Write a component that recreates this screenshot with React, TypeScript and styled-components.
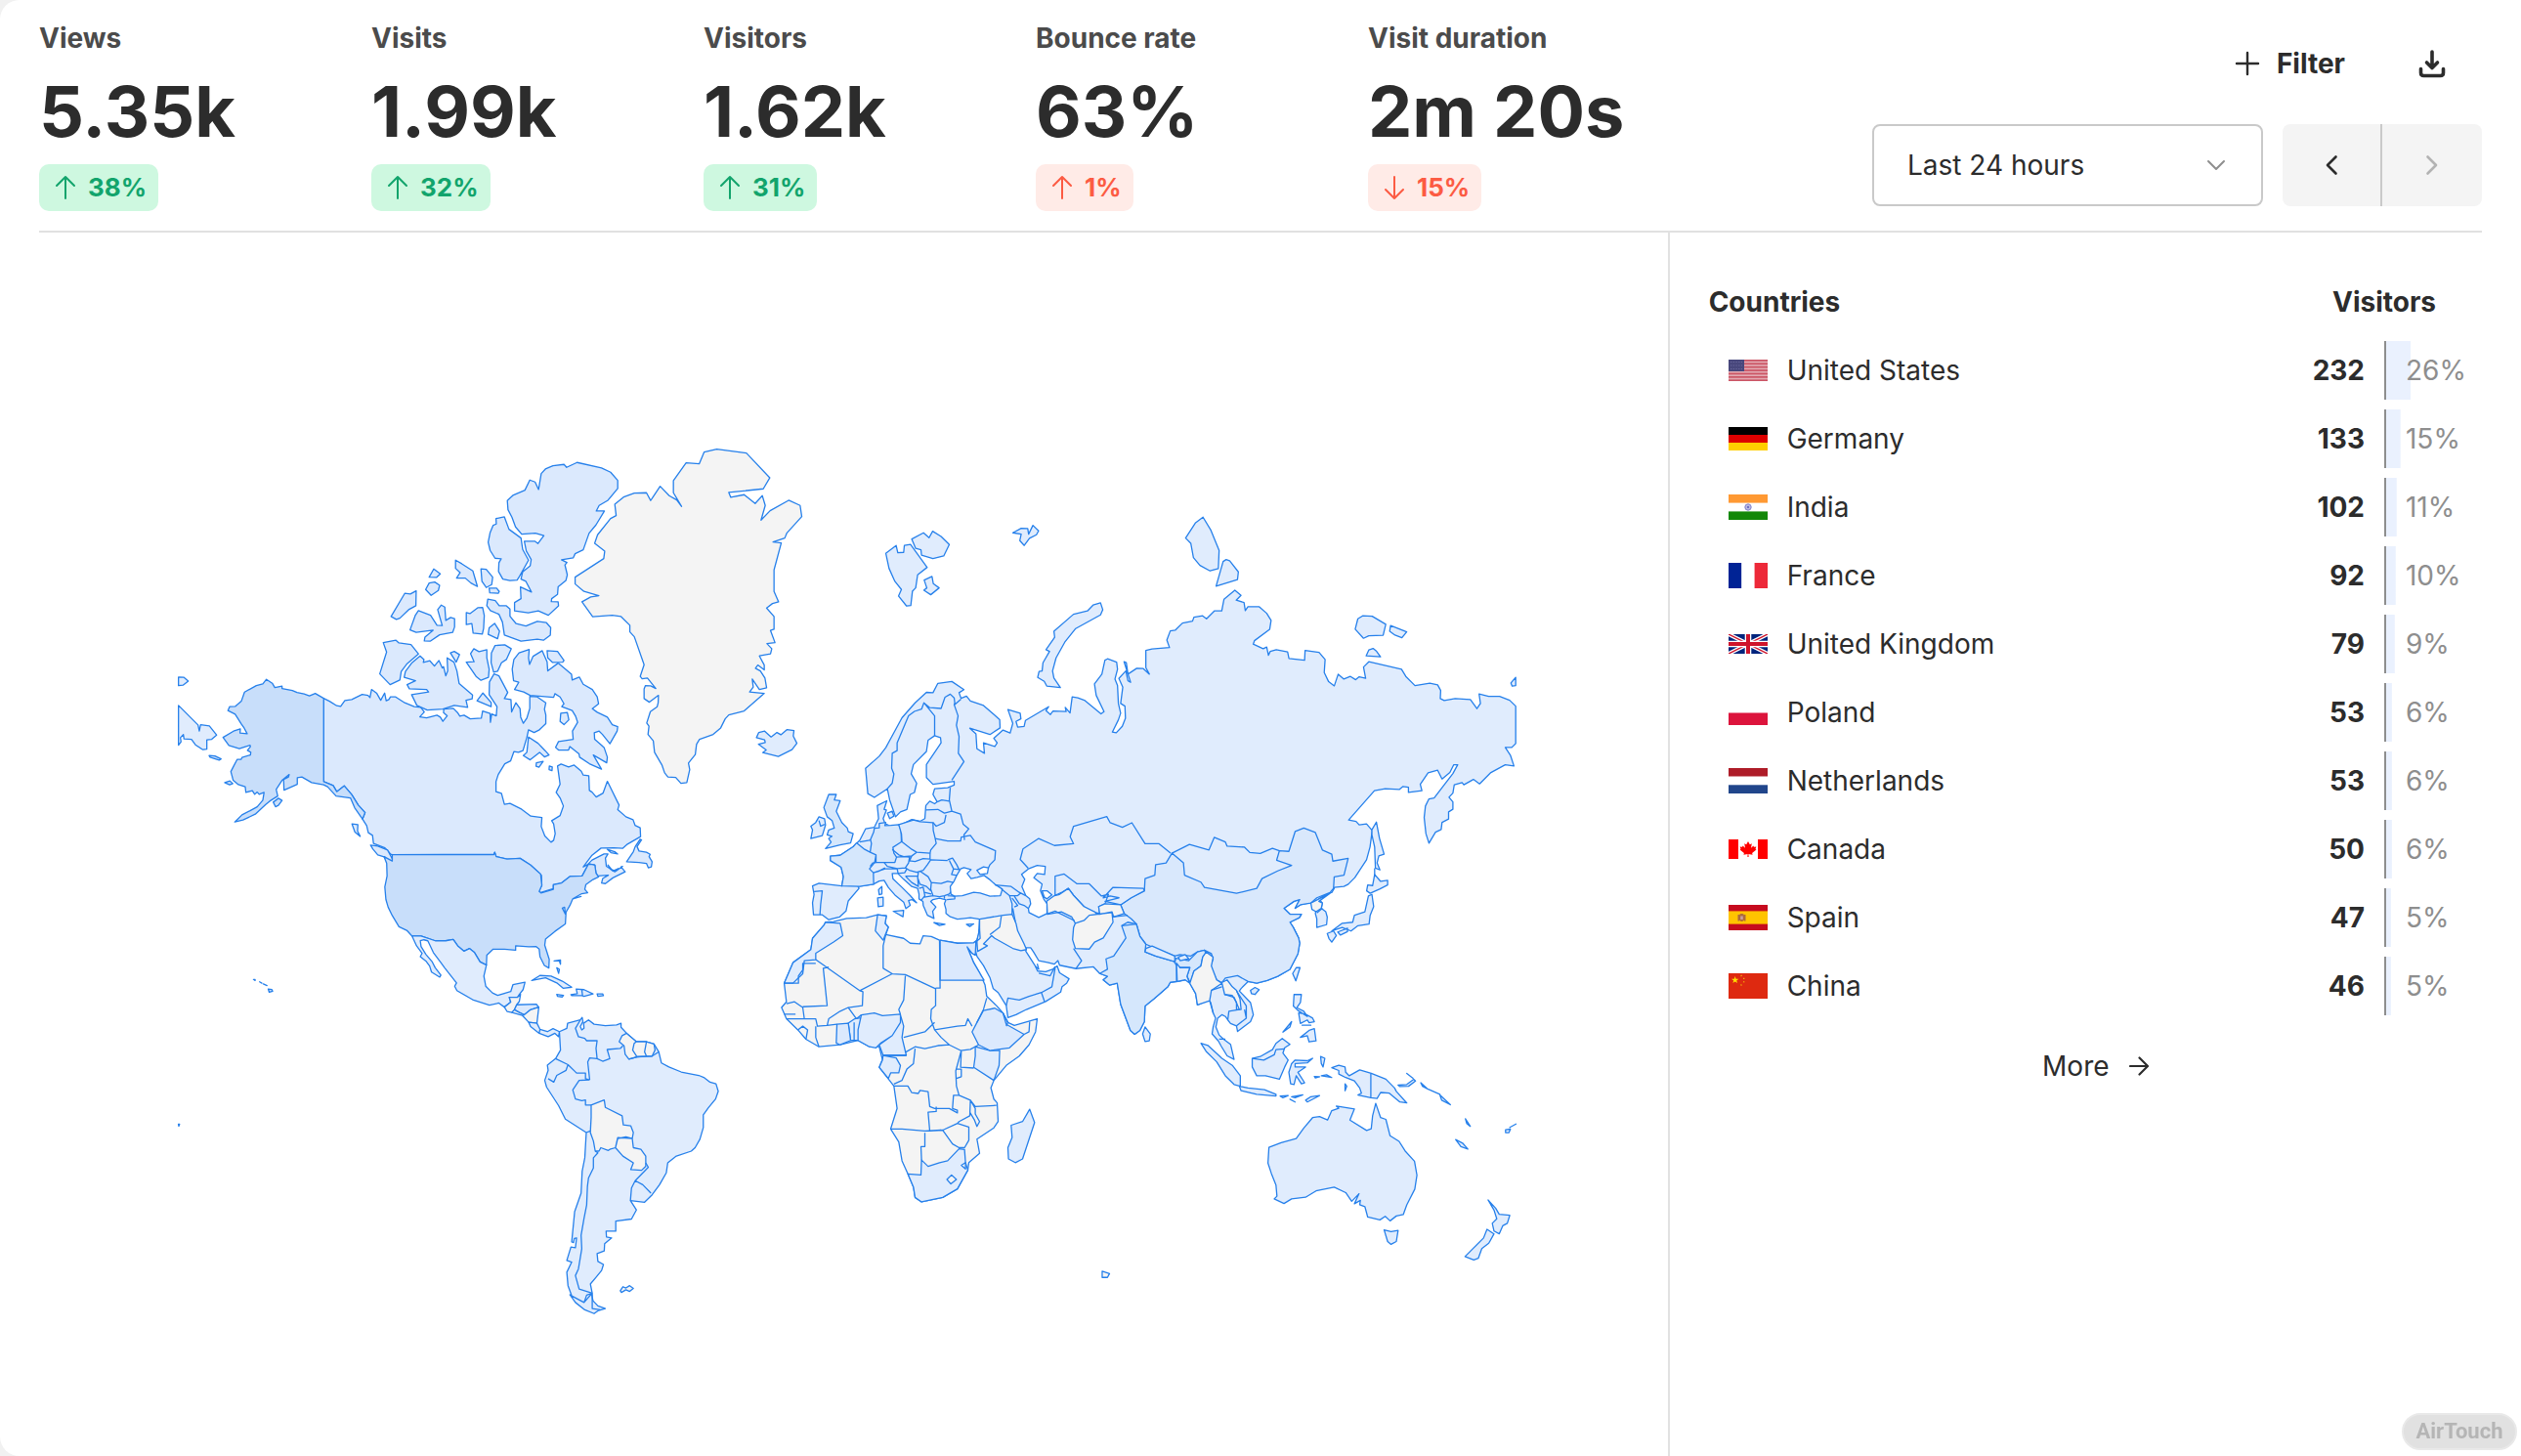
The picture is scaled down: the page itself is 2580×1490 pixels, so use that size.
import React from 'react';
import styled, { createGlobalStyle } from 'styled-components';

const GlobalStyle = createGlobalStyle`
  * { box-sizing: border-box; }
  body { margin: 0; background: #f1f1f1; }
  body, button, select, table {
    font-family: Inter, "Liberation Sans", sans-serif;
    font-size: 28px;
    line-height: 42px;
    color: #2c2c2c;
  }
`;

/* ---------- page frame ---------- */

const Page = styled.div`
  display: flex;
  flex-direction: column;
  min-height: 100vh;
  padding: 0 40px;
  background: #fff;
  border-radius: 20px 0 0 20px;
`;

const Header = styled.header`
  display: flex;
  justify-content: space-between;
  padding: 18px 0 20px;
  border-bottom: 2px solid #e1e1e1;
`;

const Metrics = styled.div`
  display: flex;
  gap: 60px;
`;

const Metric = styled.section`
  display: flex;
  flex-direction: column;
  align-items: flex-start;
  min-width: 280px;
  white-space: nowrap;
`;

const MetricLabel = styled.h2`
  margin: 0;
  font-size: 28px;
  font-weight: 700;
  color: #4b4b4b;
`;

const MetricValue = styled.div`
  font-size: 72px;
  line-height: 108px;
  font-weight: 700;
`;

const Change = styled.div<{ $good: boolean }>`
  display: flex;
  align-items: center;
  gap: 10px;
  height: 48px;
  padding: 0 12px;
  border-radius: 10px;
  font-size: 26px;
  font-weight: 700;
  color: ${(p) => (p.$good ? '#12a46c' : '#fc5b43')};
  background: ${(p) => (p.$good ? '#cef8e0' : '#ffebe7')};
`;

const Icon = styled.svg`
  display: block;
  flex: none;
  fill: none;
  stroke: currentColor;
  stroke-linecap: round;
  stroke-linejoin: round;
`;

/* ---------- toolbar ---------- */

const Tools = styled.div`
  display: flex;
  flex-direction: column;
  align-items: flex-end;
  justify-content: flex-end;
  gap: 20px;
  padding-bottom: 5px;
`;

const ToolRow = styled.div<{ $gap: number }>`
  display: flex;
  gap: ${(p) => p.$gap}px;
`;

const PlainButton = styled.button`
  display: flex;
  align-items: center;
  justify-content: center;
  gap: 16px;
  height: 84px;
  padding: 0 32px;
  border: 0;
  border-radius: 8px;
  background: transparent;
  font-weight: 700;
  cursor: pointer;
`;

const SelectBox = styled.label`
  display: grid;
  align-items: center;
  width: 400px;
  & > * { grid-area: 1 / 1; }
  & > svg { justify-self: end; margin-right: 38px; color: #8e8e8e; pointer-events: none; }
`;

const Select = styled.select`
  appearance: none;
  width: 100%;
  height: 84px;
  padding: 0 34px;
  border: 2px solid #c9c9c9;
  border-radius: 8px;
  background: #fff;
`;

const Pager = styled.div`
  display: grid;
  grid-template-columns: 1fr 1fr;
  width: 204px;
  border-radius: 8px;
  overflow: hidden;
`;

const PagerButton = styled.button`
  display: grid;
  place-items: center;
  height: 84px;
  padding: 0;
  border: 0;
  background: #f4f4f4;
  color: #2c2c2c;
  &:disabled { color: #b3b3b3; }
  &:first-child { border-right: 2px solid #c9c9c9; }
`;

/* ---------- body ---------- */

const Body = styled.main`
  display: grid;
  grid-template-columns: 2fr 1fr;
  flex: 1;
`;

const MapSvg = styled.svg`
  display: block;
  width: 100%;
  & path {
    stroke: #2680eb;
    stroke-width: 1.3;
    stroke-linejoin: round;
  }
`;

const Side = styled.aside`
  display: flex;
  flex-direction: column;
  align-items: center;
  padding: 31px 0 0 40px;
  border-left: 2px solid #e1e1e1;
`;

const Table = styled.table`
  width: 100%;
  table-layout: fixed;
  border-collapse: separate;
  border-spacing: 0 10px;
`;

const HeadCell = styled.th<{ $align: string; $width?: number }>`
  height: 60px;
  padding: 0;
  width: ${(p) => (p.$width ? p.$width + 'px' : 'auto')};
  font-weight: 700;
  text-align: ${(p) => p.$align};
`;

const NameCell = styled.td`
  height: 60px;
  padding: 0 0 0 20px;
`;

const Country = styled.div`
  display: flex;
  align-items: center;
  gap: 20px;
`;

const CountCell = styled.td`
  padding: 0 20px 0 0;
  font-weight: 700;
  text-align: right;
`;

const ShareCell = styled.td`
  padding: 0 0 0 20px;
  border-left: 2px solid #8e8e8e;
  color: #8e8e8e;
  background: linear-gradient(#eaf1fe, #eaf1fe) no-repeat padding-box;
`;

const MoreLink = styled.a`
  display: flex;
  align-items: center;
  gap: 20px;
  height: 64px;
  margin-top: 10px;
  color: #2c2c2c;
  text-decoration: none;
`;

const TouchBadge = styled.div`
  position: fixed;
  right: 4px;
  bottom: 6px;
  display: flex;
  align-items: center;
  justify-content: center;
  width: 118px;
  height: 38px;
  border: 2px solid #e9e9e9;
  border-radius: 19px;
  background: #e1e1e1;
  color: #b5b5b5;
  font-family: Roboto, "Liberation Sans", sans-serif;
  font-size: 22px;
  font-weight: 700;
`;

/* ---------- world map ---------- */

/* Each map sheet has its own origin and scale: [x, y, units per px across, units per px down]. */
const SHEETS: Record<string, number[]> = {
  A: [170, 440, 3, 3],
  B: [560, 440, 3, 3],
  C: [780, 660, 3, 2.6133],
  D: [860, 500, 2.24, 3],
  E: [1040, 760, 2.8, 2.8],
  F: [170, 820, 2.6133, 2.9037],
  G: [870, 820, 3, 3],
};

/* Turns "A 1,2 3,4 z" into path data; a letter changes the sheet, "z" closes, "|" starts a new line. */
function outline(text: string) {
  let sheet = SHEETS.A;
  let pen = 'M';
  return text
    .trim()
    .split(/\s+/)
    .map((t) => {
      if (SHEETS[t]) {
        sheet = SHEETS[t];
        return '';
      }
      if (t === 'z') {
        pen = 'M';
        return 'Z';
      }
      if (t === '|') {
        pen = 'M';
        return '';
      }
      const [x, y] = t.split(',').map(Number);
      const out = pen + (sheet[0] + x / sheet[2]).toFixed(1) + ' ' + (sheet[1] + y / sheet[3]).toFixed(1);
      pen = 'L';
      return out;
    })
    .join('');
}

const NONE = '#f4f4f4';
const LOW = '#e0ecfd';
const CANADA = '#dbe9fd';
const CHINA = '#d9e8fc';
const MID = '#d5e7fc';
const USA = '#c8defa';

const LAND: [string, string][] = [
  /* Greenland */
  [NONE, `B 413,235 398,215 375,202 347,173 318,217 305,193 268,194 235,206 208,228 212,263 195,272 155,322 146,348 177,372 174,395 86,452 86,473 113,496 159,509 134,513 107,528 140,574 200,569 227,573 254,600 254,620 268,635 298,721 286,757 292,764 308,762 334,794 318,786 302,785 298,795 298,825 314,836 342,815 341,838 338,850 317,865 306,900 313,910 310,935 326,955 330,990 353,1030 361,1053 371,1066 395,1067 411,1085 429,1083 438,1043 434,1023 455,997 459,965 468,950 510,935 533,915 547,887 558,875 605,863 667,809 622,805 633,790 630,765 652,797 674,792 669,762 655,740 640,732 647,722 667,737 667,722 652,694 686,688 690,672 675,656 700,653 686,616 697,612 697,573 674,547 692,533 711,528 697,496 697,430 719,347 694,344 730,332 736,317 782,266 777,232 742,216 685,248 657,277 670,232 661,202 639,226 605,199 564,207 558,192 664,181 684,147 612,71 521,59 482,68 467,104 427,101 388,156 388,193 z`],
  /* Canada */
  [CANADA, `A 484,824 502,833 524,847 536,849 549,831 570,828 602,812 620,815 626,822 631,797 647,809 659,830 671,808 676,832 684,828 689,820 705,820 733,838 762,850 782,852 793,866 779,881 800,884 832,876 842,882 850,895 863,878 852,868 853,857 882,855 895,868 902,879 915,876 934,887 968,885 972,863 995,871 996,898 1000,872 1014,878 1016,850 992,813 993,774 1007,749 1022,755 1049,806 1039,825 1059,828 1061,866 1074,838 1087,856 1089,882 1097,901 1108,885 1117,855 1117,818 1140,820 1166,838 1162,858 1166,875 1166,902 1145,922 1130,929 1113,921 1108,944 1096,985 1082,990 1068,988 1058,1016 1040,1025 1020,1058 1013,1080 1013,1111 1030,1116 1039,1150 1056,1147 1092,1165 1120,1186 1154,1190 1152,1218 1163,1247 1182,1266 1190,1260 1195,1240 1190,1210 1184,1200 1210,1184 1220,1155 1210,1130 1198,1113 1210,1088 1202,1032 1213,1026 1236,1035 1253,1029 1275,1048 1281,1060 1298,1062 1300,1107 1308,1112 1321,1127 1342,1115 1355,1079 1391,1152 1387,1166 1412,1188 1434,1197 1440,1214 1456,1222 1457,1249 1417,1272 1402,1285 1375,1283 1336,1284 1308,1306 1281,1342 1294,1335 1308,1321 1345,1302 1357,1302 1349,1315 1352,1340 1378,1357 1402,1340 F 1217,195 1228,210 1195,228 1175,245 1165,243 1168,230 1183,220 1155,222 1150,214 1147,190 1130,187 1113,222 1080,224 1058,243 1036,250 1036,260 998,273 998,265 1005,250 1004,220 975,190 947,170 912,172 883,165 879,152 877,158 605,159 A 690,1303 672,1283 637,1270 634,1245 621,1237 616,1215 603,1195 611,1175 590,1152 570,1120 547,1093 524,1111 513,1092 484,1080 z`],
  [CANADA, `A 628,1275 650,1278 680,1290 695,1318 697,1336 672,1312 650,1305 635,1287 z 571,1210 589,1212 588,1232 596,1248 580,1235 z
   1144,183 1133,160 1117,154 1102,185 1065,201 1048,217 1050,245 1062,268 1073,298 1092,320 1134,317 1160,325 1142,349 1133,342 1100,342 1106,372 1121,398 1118,417 1095,436 1090,458 1105,465 1122,498 1088,482 1090,518 1070,530 1070,556 1112,562 1143,556 1174,569 1205,540 1204,528 1183,527 1184,518 1202,505 1204,482 1228,462 1232,445 1225,415 1231,407 1214,399 1250,393 1256,380 1281,368 1299,317 1320,292 1346,249 1321,249 1330,232 1357,216 1387,180 1387,155 1365,130 1337,117 1262,100 1230,115 1222,106 1188,110 1165,120 1152,134 z
   1013,272 1039,267 1053,305 1090,332 1095,367 1113,400 1085,450 1078,461 1056,463 1034,458 1021,435 1022,408 1029,396 1010,394 995,370 989,345 995,315 1004,293 1014,289 z
   889,400 908,411 942,433 956,481 936,470 919,455 892,455 903,438 889,425 z 967,427 983,428 1003,452 1000,475 983,484 970,465 z 992,486 1015,486 1023,496 1020,502 994,500 z
   822,427 842,442 830,453 808,452 z 808,470 825,467 840,477 836,493 814,508 797,490 z 768,494 767,540 745,552 718,578 707,582 691,573 733,502 750,504 z
   775,555 812,569 832,600 848,601 834,552 845,538 856,544 859,585 874,576 886,580 886,605 880,622 840,629 811,649 793,648 795,636 820,615 768,622 749,614 765,570 z
   922,561 933,564 957,546 972,545 977,570 975,610 971,627 943,624 939,595 922,598 z
   988,520 1011,524 1023,540 1045,540 1056,550 1056,572 1075,595 1105,602 1140,588 1168,592 1181,607 1180,630 1159,646 1140,643 1090,649 1039,630 1033,590 1022,566 996,555 985,540 z
   1009,594 1024,618 1018,641 989,628 992,608 z 667,653 706,646 715,654 752,659 775,688 740,718 722,742 718,768 688,782 656,749 677,682 z
   780,694 792,705 790,714 810,709 824,725 838,708 848,731 852,727 859,755 865,740 863,700 884,713 893,740 900,779 941,814 940,826 921,830 926,852 885,846 850,857 802,860 770,846 754,813 806,805 800,797 747,795 740,782 766,770 731,760 735,742 755,715 z
   873,685 885,680 901,690 891,713 z 935,687 945,672 961,681 985,675 985,700 992,735 990,760 967,769 952,757 922,713 946,712 z
   1010,662 1040,660 1060,672 1045,705 1030,715 1018,741 1006,744 998,715 999,685 z
   1115,674 1113,700 1116,720 1127,695 1155,678 1170,712 1172,740 1204,716 1245,750 1247,768 1269,759 1281,781 1309,797 1324,820 1328,841 1309,856 1324,867 1355,882 1370,905 1387,911 1385,925 1363,964 1340,935 1330,925 1315,930 1316,950 1345,975 1355,1005 1353,1022 1312,998 1337,1042 1300,1025 1270,1005 1268,995 1240,972 1236,983 1205,983 1196,975 1205,957 1250,950 1248,925 1264,898 1258,880 1247,862 1215,850 1222,841 1210,820 1194,810 1190,821 1118,815 1098,805 1070,797 1083,775 1067,770 1063,735 1068,705 1084,685 z
   1170,678 1202,680 1222,708 1218,713 1187,714 1172,700 z 1212,870 1232,868 1237,890 1222,905 1210,895 z 973,808 998,837 998,850 955,832 z
   1113,943 1142,962 1164,985 1176,998 1162,1004 1147,990 1118,1013 1097,1000 1108,990 z 1137,1022 1158,1018 1145,1036 1136,1033 z 1177,1032 1186,1035 1185,1046 1176,1043 z
   F 1268,113 1255,135 1250,150 1232,180 1265,182 1285,185 1290,198 1298,195 1300,180 1292,165 1295,158 1285,152 1265,148 1260,135 1272,115 z 1180,143 1200,150 1208,157 1190,153 z 1182,190 1190,203 1203,207 1210,200 1195,208 z`],
  /* United States */
  [USA, `A 484,824 458,809 440,817 424,811 402,806 388,800 356,794 356,787 334,791 326,778 308,766 297,780 277,785 241,805 231,833 212,849 195,850 190,862 212,873 231,903 240,916 249,933 227,931 228,918 207,925 175,944 193,969 225,979 258,968 259,973 250,984 260,990 259,998 233,1006 230,1012 218,1012 206,1035 199,1049 206,1076 222,1089 243,1096 245,1113 265,1108 272,1119 280,1112 286,1119 301,1113 297,1137 280,1157 258,1169 233,1182 211,1204 236,1198 274,1180 306,1150 318,1140 343,1124 338,1104 357,1075 378,1058 376,1066 361,1073 362,1106 403,1088 403,1068 417,1066 447,1083 484,1090 496,1096 522,1124 566,1130 579,1160 603,1195 611,1175 590,1152 570,1120 547,1093 524,1111 513,1092 484,1080 z
   F 605,159 877,159 879,152 883,165 912,172 947,170 975,190 1002,217 1005,250 998,268 1003,273 1036,262 1036,248 1058,243 1080,224 1113,222 1130,187 1140,188 1147,190 1150,214 1157,225 1142,233 1123,248 1120,262 1128,272 1112,275 1088,290 1080,310 1070,330 1068,365 1040,387 1015,410 1013,428 1025,470 1024,496 1012,488 1000,462 998,440 990,432 970,433 935,430 935,443 905,440 875,440 858,458 857,487 840,478 825,450 812,438 797,446 780,430 768,411 748,415 720,415 682,401 658,401 645,385 623,373 605,340 594,315 588,292 585,255 591,222 590,185 583,165 605,178 z
   1060,318 1068,336 1066,315 z 1088,290 1110,283 z 273,558 283,560 285,565 276,568 z 234,530 238,530 238,533 z 250,537 256,541 z 260,543 270,548 z A 180,1083 196,1078 205,1086 195,1090 z 329,1143 345,1131 356,1138 345,1153 336,1157 z 132,1000 150,1001 169,1010 163,1014 135,1005 z`],
  /* Central America and the Caribbean */
  [LOW, `F 658,401 682,401 720,415 748,415 768,411 780,430 797,446 812,438 825,450 840,478 857,487 850,520 855,550 873,570 887,577 922,566 928,545 960,538 955,560 945,574 940,583 918,583 922,597 905,612 890,600 865,606 820,590 778,563 772,550 777,540 745,495 735,480 715,450 700,415 690,412 680,415 682,432 695,455 712,478 720,495 735,517 732,523 710,508 705,490 695,475 680,462 685,452 670,430 z`],
  [NONE, `F 905,612 922,597 918,583 940,583 948,574 945,595 938,605 932,620 925,628 912,625 z`],
  [CANADA, `F 938,605 990,603 997,612 975,620 958,635 945,628 932,620 z`],
  [NONE, `F 925,628 932,620 945,628 958,635 953,637 z 958,635 975,620 997,612 992,660 970,657 953,637 z`],
  [LOW, `F 970,657 992,660 1000,678 998,690 975,670 z 1000,678 1020,685 1035,676 1052,685 1050,700 1040,690 1022,700 998,690 z
   978,533 1000,518 1030,520 1060,535 1085,553 1062,556 1045,540 1015,525 z 1045,574 1063,577 1060,582 1047,580 z 1083,575 1100,572 1097,558 1118,560 1142,573 1118,580 1112,578 1085,578 z 1112,560 1114,578 z 1153,573 1168,573 1170,578 1155,580 z 1038,475 1055,472 1055,485 1052,475 z 1045,495 1052,500 1050,512 z 33,960 36,960 34,966 z`],
  /* South America */
  [LOW, `F 1052,685 1072,675 1074,660 1108,650 1113,643 1115,655 1108,670 1112,680 1118,675 1117,660 1130,650 1145,663 1175,667 1205,665 1217,660 1217,672 1232,690 1258,715 1285,715 1305,722 1318,745 1325,778 1345,790 1378,805 1425,815 1440,822 1455,835 1471,840 1477,862 1470,885 1450,912 1437,932 1437,970 1428,1005 1415,1030 1405,1040 1365,1055 1342,1075 1338,1105 1320,1140 1300,1170 1280,1192 1242,1187 1258,1215 1245,1242 1203,1248 1203,1278 1177,1278 1178,1295 1192,1298 1173,1315 1172,1337 1153,1345 1155,1368 1170,1377 1165,1395 1150,1415 1135,1435 1140,1462 1118,1490 1085,1470 1075,1440 1072,1400 1085,1370 1072,1365 1083,1325 1095,1327 1098,1298 1092,1300 1090,1312 1085,1310 1093,1220 1110,1165 1113,1100 1120,1060 1124,985 1068,945 1050,905 1018,850 1013,830 1022,800 1020,785 1042,765 1055,740 1053,700 z
   1080,1467 1118,1490 1125,1468 1138,1463 1142,1485 1155,1500 1175,1508 1155,1515 1145,1523 1120,1512 1095,1490 z`],
  [NONE, `F 1232,690 1220,697 1212,715 1225,727 1228,752 1238,767 1260,760 1248,740 1252,720 1258,715 z 1258,715 1285,715 1280,745 1285,758 1260,760 1248,740 1252,720 z 1285,715 1305,722 1308,740 1300,758 1285,758 1280,745 z
   1137,903 1172,888 1175,910 1220,935 1223,962 1243,965 1250,985 1247,1003 1208,1000 1202,1030 1187,1035 1183,1038 1163,1030 1158,1040 1148,1040 1143,1010 1135,985 1137,940 z
   1202,1030 1208,1003 1230,998 1247,1003 1250,1030 1270,1035 1283,1055 1283,1085 1272,1097 1243,1095 1250,1075 1222,1055 z 1215,1455 1222,1443 1230,1447 1240,1440 1250,1448 1240,1457 1230,1452 1218,1460 z`],
  /* Eurasia */
  [LOW, `C 540,103 583,98 620,120 605,128 611,143 628,137 640,150 680,162 730,200 731,222 700,240 638,223 657,238 660,278 683,290 680,262 715,272 722,262 712,250 740,228 762,236 770,210 755,173 793,183 795,198 780,205 785,220 805,218 D 425,712 478,670 472,682 482,694 488,683 518,685 516,672 527,689 532,640 545,643 560,650 598,692 605,685 587,635 583,600 600,570 607,527 613,523 634,533 636,555 630,585 636,605 638,660 643,690 638,710 624,748 633,750 647,730 654,705 653,668 643,660 648,610 639,583 655,560 660,590 666,595 651,532 656,535 660,570 680,552 695,553 709,570 701,550 701,497 715,493 755,488 749,465 757,437 768,435 785,413 808,407 811,395 831,391 840,400 858,376 875,376 880,340 905,312 919,328 908,343 926,350 929,375 935,363 961,363 978,383 988,405 985,432 950,467 947,478 970,492 978,487 982,512 986,500 1000,495 1026,502 1029,522 1065,527 1066,497 1098,503 1112,525 1110,565 1120,593 1133,606 1142,570 1155,585 1170,577 1182,587 1190,578 1205,583 1200,548 1212,532 1287,555 1297,577 1318,605 1352,598 1370,603 1377,620 1376,645 1385,651 1410,645 1445,648 1460,676 1468,660 1465,631 1487,638 1512,638 1535,650 1549,668 1549,783 1540,795 1525,795 1537,820 1545,852 1525,848 1492,872 1466,907 1452,893 1430,910 1426,903 1408,910 1405,935 1396,948 1405,962 1405,985 1395,993 1395,1015 1380,1025 1378,1047 1365,1055 1350,1089 1343,1060 1339,1010 1342,975 1350,953 1362,950 1382,915 1405,875 1416,848 1407,848 1398,872 1380,892 1370,865 1348,873 1330,908 1334,928 1303,933 1303,917 1290,915 1282,924 1250,922 1225,928 1166,1018 1183,1022 1190,1033 1207,1030 1220,1050 1215,1100 1207,1140 1180,1195 1165,1215 1155,1222 1133,1225
   E 912,418 905,430 893,432 868,448 878,460 875,475 888,485 892,500 890,522 862,530 862,505 858,490 860,480 848,478 850,460 838,460 815,465 800,475 813,450 797,455 768,475 785,492 818,492 812,502 785,515 795,530 810,560 813,575 808,605 785,650 750,670 720,682 690,690 665,685 645,705 640,712 672,745 680,780 672,800 645,820 635,828 632,812 615,805 607,795 600,785 590,780 578,790 573,815 582,838 595,850 615,865 625,908 605,898 588,870 580,855 562,835 565,815 572,790 565,775 558,745 552,738 520,752 515,720 498,690 495,670 488,680 465,685 442,687 435,700 395,735 370,755 368,800 355,825 340,836 328,825 300,750 290,690 268,695 250,680 262,670 240,662 222,643 172,648 125,638 120,625 110,635 90,630 65,625 50,600 42,588 30,588 28,598 55,640 62,655 85,657 105,650 118,640 125,660 152,677 145,690 132,700 128,715 85,742 30,765 0,780
   C 755,997 750,965 725,930 710,920 700,890 680,858 660,833 655,815 658,795
   G 395,410 398,362 370,358 352,360 330,362 308,355 295,345 295,332 290,315 295,303 275,298 255,302 248,308 264,325 254,338 258,360 238,350 225,320 224,308 212,300 212,285 208,268 190,262 165,240 147,222 130,222 132,238 160,265 185,290 205,312 190,302 180,305 185,320 172,330 165,310 140,290 118,265 105,243 90,245 72,255 25,262 28,268
   C 265,685 258,712 238,728 205,735 185,722 158,722 155,690 160,668 155,645 175,638 245,645 250,620 243,595 210,577 210,565 240,563 280,540 300,523 318,492 345,488 358,465 354,430 383,417 375,440 382,442 372,465 378,478 400,487 425,482 460,467 485,472 500,465 503,430 515,418 530,425 538,420 525,400 530,385 570,382 590,375 590,365 525,373 505,355 505,320 550,262 548,248 530,243 510,255 505,285 465,320 458,345 475,370 468,395 455,400 445,440 425,447 410,460 392,415 385,385 345,408 325,398 318,330 360,298 380,275 430,195 470,155 505,127 525,128 z`],
  [LOW, `B 650,929 668,925 688,943 706,929 718,936 737,920 758,923 756,940 767,962 752,982 710,1003 662,991 673,983 649,965 670,960 668,952 643,945 z
   1040,379 1072,355 1077,377 1095,376 1097,355 1116,352 1167,422 1138,445 1132,485 1122,495 1117,539 1104,541 1079,510 1088,490 1068,465 1050,425 z
   1120,335 1156,316 1173,331 1184,311 1210,327 1235,352 1218,387 1185,395 1150,385 1148,368 1132,364 z 1158,461 1182,450 1186,472 1204,485 1178,506 1157,492 1166,485 z
   D 396,136 415,122 430,123 432,140 442,113 455,130 450,142 434,153 422,175 412,160 415,140 z 832,88 850,128 869,190 867,246 848,253 825,236 810,212 804,168 792,152 815,105 z 885,218 893,222 913,256 911,280 862,300 878,224 z
   597,351 602,372 597,388 540,430 515,472 495,520 487,560 490,582 505,611 474,607 468,592 453,580 456,562 463,560 465,535 480,500 472,495 492,457 490,438 535,386 567,376 580,358 z
   1187,400 1198,391 1220,392 1251,417 1245,451 1212,452 1200,460 1181,432 z 1262,421 1299,440 1288,458 1272,450 1260,438 z 1212,496 1222,491 1230,500 1239,517 1206,514 z 1549,580 1538,597 1541,607 1549,605 z
   A 38,846 98,906 102,925 106,905 133,909 155,937 140,950 125,952 125,980 113,982 90,967 78,950 55,949 53,935 44,945 46,958 38,968 z 38,759 55,760 68,771 52,784 38,785 z
   C 175,460 192,465 195,482 185,510 150,518 155,495 150,485 165,475 z 385,450 400,445 405,458 392,465 z
   G 85,297 102,295 102,322 87,324 z 88,272 98,262 98,285 90,287 z 133,338 165,335 163,355 z 258,373 292,378 275,382 z 358,378 380,377 368,385 z`],
  [MID, `C 205,400 228,400 222,415 240,417 228,445 245,475 262,490 265,500 280,505 272,530 240,535 195,545 212,528 205,518 215,512 200,508 205,495 222,490 215,470 200,460 190,435 z
   G 90,68 110,65 107,75 125,74 150,72 157,90 158,125 132,142 135,160 143,172 138,188 105,188 80,188 80,165 62,157 66,130 63,118 73,95 75,83 90,82 z
   C 245,645 250,620 243,595 210,577 210,565 240,563 280,540 G 20,128 45,148 62,157 80,165 76,188 60,208 72,220 73,255 30,262 z`],
  [CANADA, `G 150,72 195,58 215,63 255,66 256,90 262,115 265,130 248,150 246,160 205,157 190,148 160,125 158,100 z`],
  [CHINA, `E 447,317 480,345 483,380 530,400 540,415 632,432 690,418 705,390 750,368 790,352 747,337 755,310 782,312 800,255 825,245 858,258 878,308 905,320 908,340 952,332 940,380 912,385 910,418 900,430 862,445 845,460 815,465 800,475 813,450 797,455 768,475 785,492 818,492 812,502 785,515 795,530 810,560 813,575 808,605 785,650 750,670 720,682 690,690 665,685 635,668 600,675 590,688 575,680 565,660 555,645 565,620 560,605 540,595 520,600 500,612 470,608 455,612 400,590 372,578 355,555 345,520 330,505 310,490 300,465 330,445 368,425 370,390 398,380 400,350 430,345 z 672,710 685,702 697,708 685,722 675,720 z`],
  [MID, `E 303,525 345,520 355,555 372,578 370,600 400,612 455,628 460,640 460,685 442,687 435,700 395,735 370,755 368,800 355,825 340,836 328,825 300,750 290,690 268,695 250,680 262,670 240,662 262,650 258,620 280,612 315,560 z 455,632 458,618 495,625 520,600 540,595 545,605 535,615 530,640 510,655 500,690 490,670 498,645 470,645 z`],
  [LOW, `E 372,590 390,583 455,612 455,628 400,612 370,600 z 465,615 485,608 495,620 470,625 z 460,632 470,645 498,645 490,670 498,690 485,680 462,685 z 112,383 138,377 175,405 210,405 245,440 265,435 255,462 237,470 240,490 225,487 195,470 165,438 150,418 130,430 112,438 z 250,445 278,415 365,418 368,425 330,445 300,465 255,455 295,445 270,440 z`],
  [NONE, `E 545,600 565,615 560,640 575,680 590,690 560,710 555,740 520,752 515,720 498,690 510,655 530,640 535,615 z 590,688 605,680 620,700 632,710 642,735 645,765 632,765 632,745 620,725 598,722 z 845,460 900,432 868,455 878,460 875,475 860,485 848,478 z
   88,455 108,440 125,435 150,418 165,438 195,470 225,485 232,492 210,495 195,510 170,518 160,500 130,485 90,492 z 170,518 195,510 210,495 275,487 278,515 250,560 225,572 210,592 170,590 162,565 165,530 z 237,470 255,462 300,465 310,490 280,500 275,485 240,492 z
   G 398,362 470,350 498,347 C 780,745 785,765 805,800 812,815 795,818 770,812 715,785 705,778 680,800 692,805 662,820 660,792 668,760 z`],
  ['#fff', `G 310,285 308,262 320,245 328,228 340,208 350,204 372,210 360,222 372,238 390,234 412,228 428,240 445,255 468,270 462,290 430,292 400,282 380,280 345,290 320,292 z 390,212 410,202 425,205 422,222 400,225 z
   527,225 548,208 575,197 600,200 598,225 575,222 565,235 590,255 585,275 595,300 605,315 605,345 580,357 550,342 548,330 555,315 552,300 540,290 528,262 537,240 z 590,275 605,275 620,288 605,300 597,295 z`],
  /* Japan, South-East Asia and Oceania */
  [LOW, `E 1033,228 1042,275 1055,320 1040,325 1035,345 1043,365 1030,360 1028,300 1020,265 1020,250 z 1028,378 1045,398 1065,395 1065,408 1042,420 1015,432 1005,425 1008,408 1022,410 z 1020,435 1025,470 1015,495 1012,520 980,525 960,540 935,530 920,535 905,540 935,518 965,515 970,495 1000,485 1010,440 z
   892,547 910,540 918,553 905,572 897,562 z 922,543 950,532 950,542 930,552 z 803,645 814,645 802,683 793,662 z 797,722 818,722 815,745 805,760 825,770 835,785 808,768 795,755 z 810,775 830,778 850,790 855,800 840,803 835,795 815,805 z 820,810 845,810 z 815,845 840,825 855,820 860,855 840,858 835,840 z 765,830 790,800 785,815 z
   530,862 550,868 590,905 620,925 643,955 643,985 625,980 600,955 575,915 545,885 z 640,985 665,990 712,995 745,1008 745,1013 690,1008 645,998 z 677,905 700,900 735,880 745,862 763,848 785,865 770,875 765,890 780,910 770,930 755,965 715,955 690,955 677,930 z
   790,920 800,910 835,912 850,905 835,918 800,920 800,930 830,930 808,945 827,975 818,978 803,955 797,980 787,978 782,945 z 757,1013 780,1012 765,1018 z 790,1015 822,1010 800,1018 z 830,1025 845,1015 870,1012 835,1030 z 873,900 885,905 880,930 875,920 z 855,957 870,958 858,961 z 875,955 890,952 905,960 z 785,1022 800,1030 z 943,978 948,985 943,998 z
   905,932 925,925 943,930 945,945 955,955 985,938 1018,948 1060,965 1085,990 1090,1000 1120,1033 1100,1030 1070,1005 1045,1003 1035,1020 1017,1018 980,1010 990,1005 985,990 970,970 945,960 925,950 925,940 z 1095,982 1120,980 1140,965 1145,970 1125,985 1100,986 z 1120,948 1138,962 z 1160,975 1180,993 1165,985 z 1180,993 1215,1008 z 1215,1010 1245,1038 1220,1025 z 1288,1078 1302,1100 1292,1092 z 1260,1138 1280,1148 1295,1165 1275,1158 z 1403,1110 1417,1108 1413,1118 1403,1118 z 1415,1103 1433,1093 z
   1031,1034 1045,1075 1060,1080 1072,1127 1098,1143 1115,1170 1142,1200 1149,1240 1143,1280 1120,1325 1110,1353 1090,1357 1072,1371 1058,1358 1043,1368 1008,1360 1000,1330 985,1325 987,1312 970,1322 983,1293 962,1315 945,1290 912,1274 860,1285 830,1303 790,1308 768,1321 740,1308 748,1300 745,1268 732,1235 722,1205 725,1160 760,1147 803,1135 825,1105 850,1075 870,1072 893,1082 905,1055 925,1048 918,1042 970,1050 957,1082 1005,1112 1018,1107 1022,1070 z
   1055,1397 1075,1402 1095,1398 1090,1430 1075,1438 1065,1430 z 1353,1311 1375,1335 1385,1352 1415,1355 1408,1378 1395,1385 1385,1408 1370,1400 1365,1378 1378,1365 1370,1340 z 1350,1395 1370,1408 1355,1435 1335,1450 1325,1478 1312,1483 1287,1473 1305,1455 1340,1420 z 370,815 385,835 382,855 370,857 363,835 z`],
  [NONE, `E 247,1515 268,1522 262,1533 247,1533 z`],
  /* Africa */
  [NONE, `C 195,742 220,740 260,732 320,730 355,722 382,725 378,745 388,755 380,775 435,785 455,798 485,800 495,778 520,780 545,790 600,798 650,797 657,792 655,830 645,825 630,808 650,850 670,880 685,910 690,940 720,965 740,985 755,1010 775,1018 845,1000 840,1035 820,1070 790,1100 750,1125 712,1165 703,1185 712,1215 722,1225 725,1275 712,1292 660,1322 668,1360 635,1385 632,1405 600,1455 555,1478 490,1490 470,1478 465,1450 448,1415 430,1380 420,1330 395,1295 415,1240 405,1180 360,1130 370,1110 360,1075 330,1075 295,1058 240,1070 175,1075 135,1055 110,1030 75,1000 60,970 75,955 68,905 95,850 150,815 155,785 190,750 z`],
  [LOW, `C 195,742 240,745 248,778 220,795 165,825 165,842 130,845 125,880 95,905 68,905 95,850 150,815 155,785 190,750 z 355,722 382,725 378,745 388,755 372,790 348,765 z
   305,990 345,985 370,992 425,988 425,1010 400,1045 365,1065 350,1078 330,1075 295,1058 295,1030 z 425,990 435,1020 430,1050 443,1098 372,1098 360,1070 400,1045 425,1010 z 265,1012 285,1000 303,998 295,1030 295,1058 272,1058 z 372,1098 412,1105 425,1125 420,1145 395,1145 388,1160 360,1130 370,1110 z
   655,1075 700,1085 730,1085 728,1125 712,1165 650,1130 655,1100 z 448,1415 488,1418 490,1378 510,1395 545,1385 570,1380 605,1348 622,1350 625,1385 632,1405 600,1455 555,1478 490,1490 470,1478 465,1450 z 822,1242 837,1278 800,1375 778,1385 757,1375 755,1345 768,1318 765,1285 800,1275 z`],
  [CANADA, `C 547,790 600,798 650,797 657,792 655,830 645,825 630,808 650,850 670,880 682,897 547,897 z 230,1015 265,1012 272,1058 240,1070 228,1065 z 680,978 715,972 740,985 750,1015 805,1042 760,1078 700,1085 665,1070 645,1035 660,1010 z`],
  [NONE, `C 568,1430 582,1418 597,1430 580,1442 z 612,1392 625,1385 625,1402 z`],
];

const BORDERS = `F 1108,650 1095,675 1103,700 1120,705 1125,712 1153,712 1150,735 1153,765 1133,763 1128,775 1133,828 | 1042,765 1075,783 1098,808 1122,808 1122,825 1133,828 | 1075,783 1070,800 1045,815 1037,835 1022,825 | 1133,828 1105,830 1088,858 1095,885 1112,890 1122,888 1122,903 1137,903 | 1135,980 1124,985 | 1153,765 1168,773 1187,765 1180,738 1215,735 1222,727 | 1238,767 1260,760 1300,758 1318,745
 | 1148,1040 1155,1045 1143,1060 1143,1090 1130,1120 1127,1145 1125,1200 1118,1240 1110,1290 1112,1330 1103,1390 1095,1410 1105,1450 1140,1462 | 1283,1075 1290,1088 1255,1128 1245,1150 1242,1187 | 1255,1128 1275,1140 1297,1165 | 1140,1463 1140,1508 1162,1512
 | C 385,385 400,370 405,345 398,330 400,290 415,283 415,262 450,190 468,178 490,172 497,155 530,190 530,243 | 497,155 515,168 550,170 562,140 578,132 590,142 592,155 590,160 602,190 597,215 605,245 603,290 620,312 583,362 | 592,160 611,145
 | 578,382 575,415 583,445 610,453 618,480 635,492 620,508 622,522 | 538,420 552,415 575,418 | 503,442 540,440 560,450 583,445 | 565,455 560,475 535,485 525,475 | 175,470 180,485 192,480 | 160,660 185,658 180,695 178,722
 | G 30,125 60,120 63,118 | 40,148 | 130,148 150,165 165,170 190,168 205,157 | 143,172 165,170 183,172 180,190 170,205 145,207 115,200 105,188 | 62,200 70,190 80,188 | 108,205 88,215 72,220 | 183,183 190,168 | 183,183 200,185 225,176 246,178 246,160
 | 170,205 182,212 205,218 225,212 238,195 248,180 300,182 | 205,218 215,215 240,232 250,250 280,253 300,246 318,250 | 250,250 248,270 255,290 275,293 290,290 305,285 310,278 | 210,218 208,235 215,255 235,262 248,275 | 170,230 208,230 210,262 190,250 172,232 | 147,222 168,220 175,208 | 212,268 225,264 230,290 218,305 | 228,280 250,285 | 228,295 255,290 | 72,220 108,208 145,207 148,222 | 290,290 290,300 | 300,290 322,292 322,300 298,302
 | 262,115 300,122 340,122 342,110 370,105 385,125 447,152 445,180 430,195 425,205 | 300,180 315,175 328,195 335,210 318,208 305,182 | 318,208 312,225 328,228
 | 445,257 495,262 520,280 540,290 | 465,270 490,290 515,290 525,282 | 490,290 498,315 498,347 | 498,298 515,320 505,325 | 505,292 520,315 535,320 548,330
 | C 770,705 778,740 | 875,720 900,712 960,738 | 735,725 730,755 700,775 | 900,860 885,885 850,878 | 900,865 890,915 858,930 868,955 | 858,930 820,940 790,950 755,945 750,965 | 845,853 850,868 840,860 | 668,760 670,785 660,792
 | E 35,360 12,335 20,305 65,275 110,295 165,290 155,270 165,240 260,212 270,230 305,243 332,230 370,290 410,290 443,317 | 447,317 497,292 553,308 568,272 600,285 605,297 655,300 670,315 700,318 735,303 755,310 | 172,648 188,625 165,590 | 303,525 320,515 345,520 | 275,500 320,495 | 560,710 590,700 | 598,722 625,730 640,765 610,770 607,795 | 655,765 660,790 632,812 | 632,712 660,755 660,790 | 555,740 565,775 | 582,850 600,850 | 862,488 878,475 | 1028,360 1028,385 | 677,905 710,910 740,895 745,880 770,878 | 1017,948 1017,1018
 | C 165,842 300,925 400,880 372,865 372,805 380,775 | 300,925 310,928 308,965 265,970 | 125,968 200,965 188,865 205,862 | 68,905 112,905 112,885 125,870 125,852 165,852 | 75,960 100,955 125,970 130,1000 75,1000 | 68,988 103,988 | 130,1000 165,1000 170,1020 200,1018 205,1000 240,980 265,970 290,1000 | 200,1018 230,1015 | 110,1030 125,1020 140,1030 135,1055 | 165,1020 165,1050 175,1075 | 283,1010 283,1058 | 290,1000 305,990
 | 400,880 440,882 533,920 533,965 520,975 518,1000 530,1030 600,1020 625,1018 632,1000 645,1020 | 440,885 435,950 420,975 425,988 | 545,790 547,918 533,918 | 530,1010 500,1035 435,1050 | 530,1030 550,1050 575,1070 540,1072 500,1080 470,1075 440,1090 | 660,1010 680,975 690,945 | 575,1070 610,1085 640,1082 665,1070 | 805,1042 820,1035 822,1008 | 740,985 755,1010 750,1020
 | 470,1080 465,1120 445,1135 430,1165 405,1175 | 372,1098 443,1098 | 405,1180 448,1180 460,1198 480,1200 485,1192 510,1195 515,1235 530,1240 575,1240 600,1252 600,1245 585,1240 588,1205 605,1205 597,1180 595,1140 612,1085 610,1130 650,1132 | 597,1135 612,1135 612,1155 597,1160 | 605,1205 640,1218 655,1235 720,1232 | 640,1218 638,1260 605,1275 600,1280 555,1298 515,1300 510,1250 535,1248 535,1235 | 640,1218 655,1240 655,1255 668,1275 660,1288 652,1270 638,1250
 | 395,1295 430,1295 500,1300 550,1298 | 500,1305 500,1342 488,1342 490,1378 | 555,1298 585,1335 605,1345 622,1345 635,1325 635,1290 600,1280`;

function WorldMap() {
  return (
    <MapSvg viewBox="40 238 1667 1250" role="img" aria-label="Visitors by country">
      {LAND.map(([fill, text], i) => (
        <path key={i} fill={fill} d={outline(text)} />
      ))}
      <path fill="none" d={outline(BORDERS)} />
    </MapSvg>
  );
}

/* ---------- flags ---------- */

type Band = [string, number, number, number, number];

function Flag({ h, bands, children }: { h: number; bands: Band[]; children?: React.ReactNode }) {
  return (
    <svg width="40" height={h} viewBox={`0 0 40 ${h}`} aria-hidden="true">
      {bands.map(([fill, x, y, w, bh], i) => (
        <rect key={i} fill={fill} x={x} y={y} width={w} height={bh} />
      ))}
      {children}
    </svg>
  );
}

const STRIPES: Band[] = [0, 1, 2, 3, 4, 5, 6].map((i) => ['#cb5565', 0, i * 3.4, 40, 1.7]);

const FLAGS: Record<string, React.ReactNode> = {
  US: (
    <Flag h={22} bands={[['#e3a9b1', 0, 0, 40, 22], ...STRIPES, ['#48477c', 0, 0, 16, 12]]}>
      <path d="M2 2.5h12M2 6h12M2 9.5h12" stroke="#66659a" strokeWidth="1.2" strokeDasharray="1.4 1.3" />
    </Flag>
  ),
  DE: <Flag h={24} bands={[['#000', 0, 0, 40, 8], ['#d00', 0, 8, 40, 8], ['#ffce00', 0, 16, 40, 8]]} />,
  IN: (
    <Flag h={26} bands={[['#f93', 0, 0, 40, 9], ['#fff', 0, 8.6, 40, 9], ['#138808', 0, 17.4, 40, 8.6]]}>
      <circle cx="20" cy="13" r="3.2" fill="#b9b9e2" stroke="#8484cb" strokeWidth="1" />
      <circle cx="20" cy="13" r="1" fill="#5a5ab8" />
    </Flag>
  ),
  FR: <Flag h={26} bands={[['#002395', 0, 0, 13.4, 26], ['#fff', 13.4, 0, 13.2, 26], ['#ed2939', 26.6, 0, 13.4, 26]]} />,
  GB: (
    <Flag h={20} bands={[['#00247d', 0, 0, 40, 20]]}>
      <path d="M0 0L40 20M40 0L0 20" stroke="#fff" strokeWidth="4" />
      <path d="M0 0L40 20M40 0L0 20" stroke="#cf142b" strokeWidth="1.4" />
      <path d="M20 0V20M0 10H40" stroke="#fff" strokeWidth="6.6" />
      <path d="M20 0V20M0 10H40" stroke="#cf142b" strokeWidth="4" />
    </Flag>
  ),
  PL: <Flag h={25} bands={[['#fff', 0, 0, 40, 12.5], ['#dc143c', 0, 12.5, 40, 12.5]]} />,
  NL: <Flag h={26} bands={[['#ae1c28', 0, 0, 40, 8.7], ['#fff', 0, 8.7, 40, 8.7], ['#21468b', 0, 17.3, 40, 8.7]]} />,
  CA: (
    <Flag h={20} bands={[['#fff', 0, 0, 40, 20], ['#f00', 0, 0, 10, 20], ['#f00', 30, 0, 10, 20]]}>
      <path fill="#f00" d="M20 2l1.8 3.2 2-1-.8 4.6 2.4-2.3.6 1.3 2.4-.4-.9 2.5 1 .7-4.4 3.4.5 1.7-4.2-.6.2 3h-1.2l.2-3-4.2.6.5-1.7-4.4-3.4 1-.7-.9-2.5 2.4.4.6-1.3 2.4 2.3-.8-4.6 2 1z" />
    </Flag>
  ),
  ES: (
    <Flag h={26} bands={[['#c60b1e', 0, 0, 40, 26], ['#ffc400', 0, 6.4, 40, 13.2]]}>
      <path fill="#ad6a3c" d="M9.5 10h1.5v6.6H9.5zM11 10.4c1-1.8 4-1.8 5 0v5.2c-.8 1.8-4.2 1.8-5 0zM16 10h1.5v6.6H16z" />
      <path fill="#c9a0a0" d="M12.2 11.6h2.6v3.4h-2.6z" />
    </Flag>
  ),
  CN: (
    <Flag h={26} bands={[['#de2910', 0, 0, 40, 26]]}>
      <path fill="#ffde00" d="M6.7 3l.9 2.7h2.8L8.2 7.4 9 10 6.7 8.4 4.4 10l.8-2.6L3 5.700h2.800z" />
      <path stroke="#f2a50a" strokeWidth="1.3" d="M12.5 2.8l1.2-.6M15 5.4h1.4M15 8.6l1.4.4M12.5 11.5l1 .9" />
    </Flag>
  ),
};

/* ---------- data ---------- */

const METRICS = [
  { label: 'Views', value: '5.35k', change: '38%', up: true, good: true },
  { label: 'Visits', value: '1.99k', change: '32%', up: true, good: true },
  { label: 'Visitors', value: '1.62k', change: '31%', up: true, good: true },
  { label: 'Bounce rate', value: '63%', change: '1%', up: true, good: false },
  { label: 'Visit duration', value: '2m 20s', change: '15%', up: false, good: false },
];

const COUNTRIES: [string, string, number, number][] = [
  ['US', 'United States', 232, 26],
  ['DE', 'Germany', 133, 15],
  ['IN', 'India', 102, 11],
  ['FR', 'France', 92, 10],
  ['GB', 'United Kingdom', 79, 9],
  ['PL', 'Poland', 53, 6],
  ['NL', 'Netherlands', 53, 6],
  ['CA', 'Canada', 50, 6],
  ['ES', 'Spain', 47, 5],
  ['CN', 'China', 46, 5],
];

export default function App() {
  return (
    <>
      <GlobalStyle />
      <Page>
        <Header>
          <Metrics>
            {METRICS.map((m) => (
              <Metric key={m.label}>
                <MetricLabel>{m.label}</MetricLabel>
                <MetricValue>{m.value}</MetricValue>
                <Change $good={m.good}>
                  <Icon width="28" height="26" viewBox="0 0 28 26" strokeWidth="2">
                    <path d={m.up ? 'M15 24V2M6 11l9-9 9 9' : 'M15 2v22M6 15l9 9 9-9'} />
                  </Icon>
                  {m.change}
                </Change>
              </Metric>
            ))}
          </Metrics>
          <Tools>
            <ToolRow $gap={6}>
              <PlainButton type="button">
                <Icon width="28" height="28" viewBox="0 0 28 28" strokeWidth="2.4">
                  <path d="M14 3v22M3 14h22" />
                </Icon>
                Filter
              </PlainButton>
              <PlainButton type="button" aria-label="Download">
                <Icon width="38" height="38" viewBox="0 0 38 38" strokeWidth="3.6">
                  <path d="M19 7v16M13.5 18l5.5 5.5 5.5-5.5M7.5 24.5v4q0 3 3 3h17q3 0 3-3v-4" />
                </Icon>
              </PlainButton>
            </ToolRow>
            <ToolRow $gap={20}>
              <SelectBox>
                <Select aria-label="Date range" defaultValue="24h">
                  <option value="24h">Last 24 hours</option>
                  <option value="7d">Last 7 days</option>
                </Select>
                <Icon width="20" height="12" viewBox="0 0 20 12" strokeWidth="2">
                  <path d="M2 2l8 8 8-8" />
                </Icon>
              </SelectBox>
              <Pager>
                <PagerButton type="button" aria-label="Previous period">
                  <Icon width="14" height="22" viewBox="0 0 14 22" strokeWidth="2.6">
                    <path d="M11.5 2.5L3 11l8.5 8.5" />
                  </Icon>
                </PagerButton>
                <PagerButton type="button" aria-label="Next period" disabled>
                  <Icon width="14" height="22" viewBox="0 0 14 22" strokeWidth="2.6">
                    <path d="M2.5 2.5L11 11l-8.5 8.5" />
                  </Icon>
                </PagerButton>
              </Pager>
            </ToolRow>
          </Tools>
        </Header>
        <Body>
          <WorldMap />
          <Side>
            <Table>
              <thead>
                <tr>
                  <HeadCell $align="left">Countries</HeadCell>
                  <HeadCell $align="center" $width={200} colSpan={2}>
                    Visitors
                  </HeadCell>
                </tr>
              </thead>
              <tbody>
                {COUNTRIES.map(([code, name, count, share]) => (
                  <tr key={code}>
                    <NameCell>
                      <Country>
                        {FLAGS[code]}
                        {name}
                      </Country>
                    </NameCell>
                    <CountCell>{count}</CountCell>
                    <ShareCell style={{ backgroundSize: `${share}% 100%` }}>{share}%</ShareCell>
                  </tr>
                ))}
              </tbody>
            </Table>
            <MoreLink href="#countries">
              More
              <Icon width="20" height="20" viewBox="0 0 20 20" strokeWidth="2.2">
                <path d="M1 10h18M10.5 1.5L19 10l-8.5 8.5" />
              </Icon>
            </MoreLink>
          </Side>
        </Body>
      </Page>
      <TouchBadge>AirTouch</TouchBadge>
    </>
  );
}
